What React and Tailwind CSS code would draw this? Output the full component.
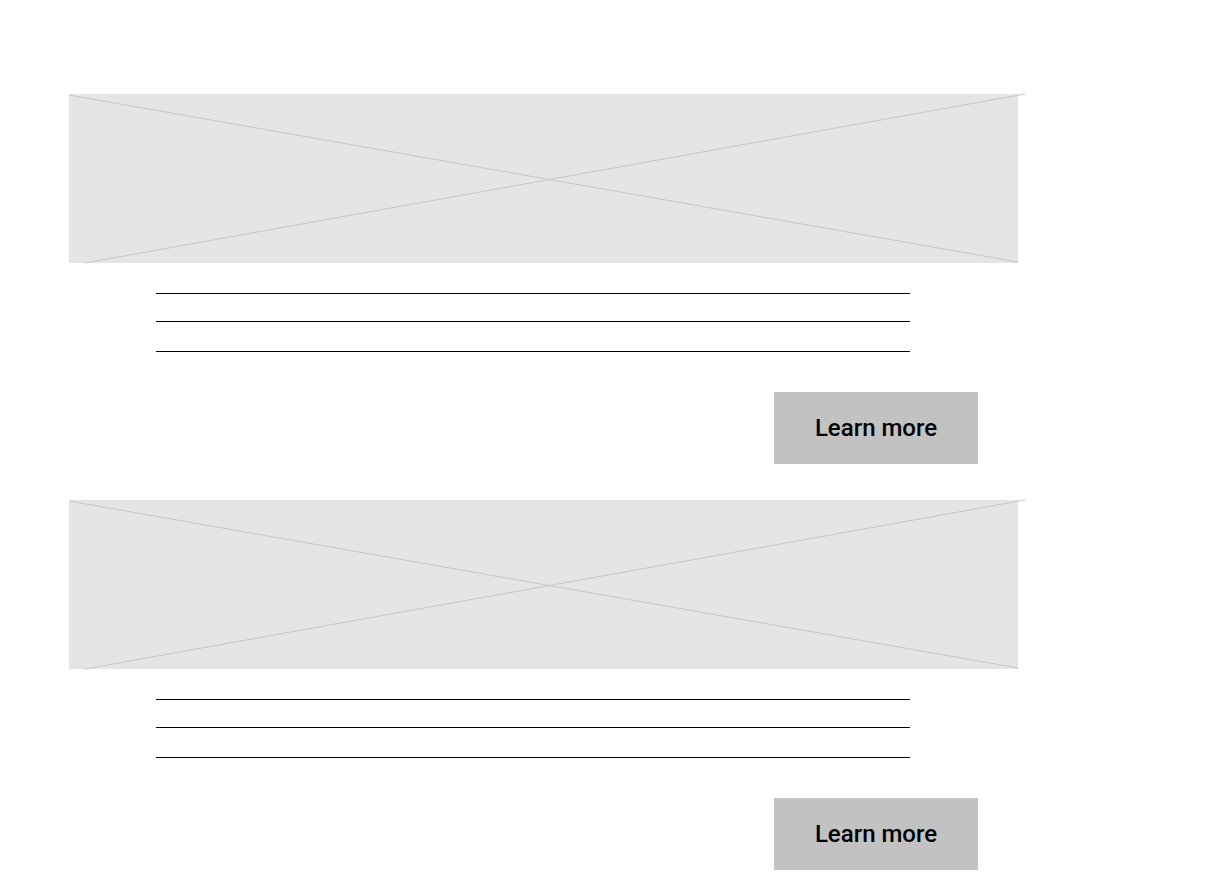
const Placeholder = () => {
  return (
    <div className="relative w-[949px] h-[169px] bg-[#e5e5e5]">
      <svg className="absolute left-0 top-0 overflow-visible" width="949" height="169">
        <line x1="0" y1="1" x2="949" y2="168" stroke="#c6c6c6" strokeWidth="1" />
        <line x1="956" y1="0" x2="16" y2="169" stroke="#c6c6c6" strokeWidth="1" />
      </svg>
    </div>
  );
};

const Block = () => {
  return (
    <div className="flex flex-col">
      <Placeholder />
      {/* Text lines */}
      <div className="ml-[87px] mt-[30px] w-[754px] flex flex-col">
        <div className="h-[28px] border-t border-black" />
        <div className="h-[30px] border-t border-black" />
        <div className="h-0 border-t border-black" />
      </div>
      <button className="ml-[705px] mt-[40px] w-[204px] h-[72px] bg-[#c2c2c2] text-black text-[24px] font-medium flex items-center justify-center">
        Learn more
      </button>
    </div>
  );
};

export default function App() {
  return (
    <div
      className="min-h-screen bg-white pl-[69px] pt-[94px] flex flex-col gap-[36px]"
      style={{ fontFamily: 'Roboto, "Noto Sans", sans-serif' }}
    >
      <Block />
      <Block />
    </div>
  );
}
